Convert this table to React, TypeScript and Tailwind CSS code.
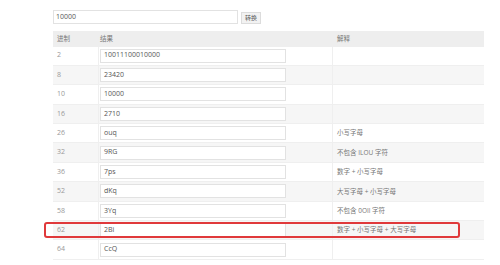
import React from "react";

const rows: [string, string, string][] = [
  ["2", "10011100010000", ""],
  ["8", "23420", ""],
  ["10", "10000", ""],
  ["16", "2710", ""],
  ["26", "ouq", "小写字母"],
  ["32", "9RG", "不包含 ILOU 字符"],
  ["36", "7ps", "数字 + 小写字母"],
  ["52", "dKq", "大写字母 + 小写字母"],
  ["58", "3Yq", "不包含 0OIl 字符"],
  ["62", "2Bi", "数字 + 小写字母 + 大写字母"],
  ["64", "CcQ", ""],
];

export default function App() {
  return (
    <div
      className="relative w-[500px] h-[265px] overflow-hidden bg-white text-[7px] text-[#666]"
      style={{ fontFamily: '"Open Sans", "Noto Sans CJK SC", sans-serif' }}
    >
      <div className="pl-[53px] pt-[10px]">
        <div className="flex items-end gap-[3px]">
          <div className="w-[185px] h-[14px] border border-[#e2e2e2] flex items-center pl-[2px] text-[#555]">
            10000
          </div>
          <div className="w-[20px] h-[12px] border border-[#dcdcdc] bg-[#f2f2f2] flex items-center justify-center text-[6px] text-[#555]">
            转换
          </div>
        </div>
        <div className="mt-[6.5px] w-[431px]">
          <div className="grid grid-cols-[46px_234px_151px] h-[16px] bg-[#eeeeee] items-center">
            <div className="pl-[4px] text-[6.5px] text-[#777]">进制</div>
            <div className="pl-[1px] text-[6.5px] text-[#777]">结果</div>
            <div className="pl-[4px] text-[6.5px] text-[#777]">解释</div>
          </div>
          {rows.map(([b, r, e], i) => (
            <div
              key={b}
              className={`grid grid-cols-[46px_234px_151px] h-[19.4px] border-b border-[#efefef] ${
                i % 2 === 1 ? "bg-[#f6f6f6]" : "bg-white"
              }`}
            >
              <div className="pl-[4px] flex items-center text-[#999] border-r border-[#efefef]">{b}</div>
              <div className="flex items-center pl-[1px] border-r border-[#efefef]">
                <div className="w-[186px] h-[14px] bg-white border border-[#e2e2e2] flex items-center pl-[3px] text-[#555]">
                  {r}
                </div>
              </div>
              <div className="pl-[4px] flex items-center text-[6.5px] text-[#777]">{e}</div>
            </div>
          ))}
        </div>
      </div>
      <div className="absolute left-[44px] top-[222px] w-[416px] h-[16px] border-2 border-[#e0393b] rounded-[3px]" />
    </div>
  );
}
